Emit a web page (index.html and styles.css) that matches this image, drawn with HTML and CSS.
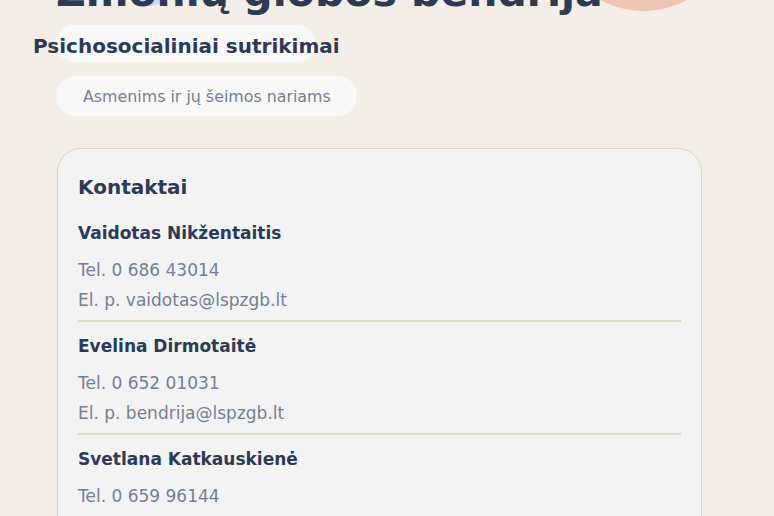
FILE: index.html
```html
<!DOCTYPE html>
<html lang="lt">
<head>
<meta charset="utf-8">
<title>Žmonių globos bendrija</title>
<link rel="stylesheet" href="styles.css">
</head>
<body>
<main class="page">
  <header class="hero">
    <span class="blob blob-blue"></span>
    <span class="blob blob-pink"></span>
    <h1 class="hero-title">Žmonių globos bendrija</h1>
    <div class="badge"><h2 class="badge-title">Psichosocialiniai sutrikimai</h2></div>
    <p class="pill">Asmenims ir jų šeimos nariams</p>
  </header>

  <section class="card">
    <h3 class="card-title">Kontaktai</h3>
    <div class="contact">
      <h4 class="contact-name">Vaidotas Nikžentaitis</h4>
      <p class="contact-line">Tel. 0 686 43014</p>
      <p class="contact-line">El. p. vaidotas@lspzgb.lt</p>
    </div>
    <div class="contact">
      <h4 class="contact-name">Evelina Dirmotaitė</h4>
      <p class="contact-line">Tel. 0 652 01031</p>
      <p class="contact-line">El. p. bendrija@lspzgb.lt</p>
    </div>
    <div class="contact">
      <h4 class="contact-name">Svetlana Katkauskienė</h4>
      <p class="contact-line">Tel. 0 659 96144</p>
      <p class="contact-line">El. p. svetlana@lspzgb.lt</p>
    </div>
  </section>
</main>
</body>
</html>
```

FILE: styles.css
```css
* { box-sizing: border-box; }
html, body {
  margin: 0;
  padding: 0;
  background: #f3efe8;
  overflow: hidden;
}
body {
  font-family: "DejaVu Sans", sans-serif;
  color: #2d3a55;
}
.page {
  padding: 0 72px 40px 56px;
}
.hero {
  position: relative;
  margin-top: -32px;
}
.blob {
  position: absolute;
  border-radius: 50%;
  z-index: 0;
}
.blob-blue {
  left: 74px;
  top: -2px;
  width: 40px;
  height: 40px;
  background: #c9dbe8;
}
.blob-pink {
  left: 496px;
  top: -140px;
  width: 183px;
  height: 183px;
  background: #eec5b3;
}
.hero-title {
  position: relative;
  z-index: 1;
  margin: 0;
  font-size: 41px;
  line-height: 48px;
  font-weight: 700;
  color: #2d3a55;
}
.badge {
  position: relative;
  z-index: 1;
  margin-top: 9px;
  width: 260px;
  height: 37px;
  border-radius: 19px;
  background: #f8f8f8;
  display: flex;
  align-items: center;
}
.badge-title {
  margin: 4px 0 0 -23px;
  white-space: nowrap;
  font-size: 20px;
  font-weight: 700;
  color: #2d3a55;
}
.pill {
  display: inline-flex;
  align-items: center;
  margin: 14px 0 0;
  height: 40px;
  padding: 0 26px 0 27px;
  border-radius: 20px;
  background: #f8f8f9;
  font-size: 15.85px;
  color: #718096;
}
.card {
  margin-top: 32px;
  margin-left: 1px;
  background: #f3f3f3;
  border: 1px solid #e2d5c1;
  border-radius: 24px;
  padding: 22px 20px 20px;
}
.card-title {
  margin: 0 0 18px;
  font-size: 20px;
  line-height: 32px;
  font-weight: 700;
  color: #2d3a55;
}
.contact {
  padding-bottom: 5px;
  border-bottom: 2px solid #e2d8c8;
  margin-bottom: 12px;
}
.contact-name {
  margin: 0 0 10px;
  font-size: 17px;
  line-height: 24px;
  font-weight: 700;
  color: #2d3a55;
}
.contact-line {
  margin: 0;
  font-size: 17px;
  line-height: 30px;
  color: #718096;
}
```
